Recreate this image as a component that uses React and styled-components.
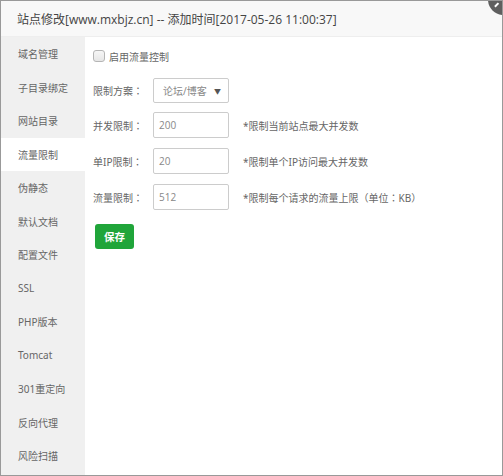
import React from "react";
import styled, { createGlobalStyle } from "styled-components";

const Global = createGlobalStyle`
  html, body { margin: 0; padding: 0; background: #fff; }
  body { font-family: "Noto Sans", "Noto Sans CJK SC", sans-serif; }
  * { box-sizing: border-box; }
`;

const Window = styled.div`
  position: relative;
  width: 503px;
  height: 476px;
  border: 1px solid #999;
  overflow: hidden;
  display: flex;
  flex-direction: column;
  background: #fff;
`;

const TitleBar = styled.div`
  height: 36px;
  flex: none;
  background: #f8f8f8;
  border-bottom: 1px solid #eee;
  padding-left: 16px;
  display: flex;
  align-items: center;
  font-size: 12px;
  color: #444;
  font-family: "Open Sans", "Noto Sans CJK SC", sans-serif;
`;

const CloseBtn = styled.div`
  position: absolute;
  top: -17px;
  right: -17px;
  width: 31px;
  height: 31px;
  border-radius: 50%;
  background: #5f5f5f;
  &::before {
    content: "";
    position: absolute;
    left: 6px;
    top: 20px;
    width: 5px;
    height: 1.5px;
    background: #fff;
    transform: rotate(-45deg);
  }
`;

const Body = styled.div`
  flex: 1;
  display: flex;
  min-height: 0;
`;

const Sidebar = styled.div`
  width: 84px;
  flex: none;
  background: #f0f0f0;
  display: flex;
  flex-direction: column;
`;

const NavItem = styled.div`
  height: 33.5px;
  flex: none;
  display: flex;
  align-items: center;
  padding-left: 17px;
  font-size: 10px;
  color: #666;
  background: ${(p) => (p.$active ? "#fff" : "transparent")};
`;

const Content = styled.div`
  flex: 1;
  padding: 9px 0 0 8px;
  font-size: 10px;
  color: #666;
  font-family: "Noto Sans", "Noto Sans CJK TC", sans-serif;
  display: flex;
  flex-direction: column;
  align-items: flex-start;
`;

const CheckRow = styled.div`
  height: 20px;
  display: flex;
  align-items: center;
  gap: 4px;
  margin-bottom: 12px;
  color: #666;
`;

const CheckBox = styled.span`
  width: 12px;
  height: 12px;
  border: 1px solid #b5b5b5;
  border-radius: 3px;
  background: linear-gradient(#f6f6f6, #e6e6e6);
  display: inline-block;
`;

const Row = styled.div`
  display: flex;
  align-items: center;
  margin-bottom: ${(p) => p.$mb}px;
`;

const Label = styled.span`
  width: 60px;
  flex: none;
  color: #666;
`;

const Select = styled.div`
  width: 76px;
  height: 25px;
  border: 1px solid #ccc;
  border-radius: 2px;
  display: flex;
  align-items: center;
  justify-content: space-between;
  padding: 0 7px 0 9px;
  color: #888;
  white-space: nowrap;
`;

const Arrow = styled.span`
  font-size: 7px;
  color: #555;
`;

const Input = styled.div`
  width: 76px;
  height: 26px;
  border: 1px solid #ccc;
  border-radius: 2px;
  display: flex;
  align-items: center;
  padding-left: 5px;
  color: #888;
  font-family: "Open Sans", sans-serif;
  font-size: 10px;
`;

const Hint = styled.span`
  margin-left: 14px;
  color: #666;
`;

const SaveBtn = styled.button`
  margin-left: 2px;
  width: 39px;
  height: 25px;
  border: none;
  border-radius: 3px;
  background: #20a53a;
  color: #fff;
  font-size: 10.5px;
  font-weight: bold;
  font-family: "Noto Sans CJK SC", sans-serif;
  padding: 0;
`;

const navs = [
  "域名管理",
  "子目录绑定",
  "网站目录",
  "流量限制",
  "伪静态",
  "默认文档",
  "配置文件",
  "SSL",
  "PHP版本",
  "Tomcat",
  "301重定向",
  "反向代理",
  "风险扫描",
];

const fields = [
  { label: "并发限制：", value: "200", hint: "*限制当前站点最大并发数" },
  { label: "单IP限制：", value: "20", hint: "*限制单个IP访问最大并发数" },
  { label: "流量限制：", value: "512", hint: "*限制每个请求的流量上限（单位：KB）" },
];

export default function App() {
  return (
    <>
      <Global />
      <Window>
        <CloseBtn />
        <TitleBar>站点修改[www.mxbjz.cn] -- 添加时间[2017-05-26 11:00:37]</TitleBar>
        <Body>
          <Sidebar>
            {navs.map((n) => (
              <NavItem key={n} $active={n === "流量限制"}>
                {n}
              </NavItem>
            ))}
          </Sidebar>
          <Content>
            <CheckRow>
              <CheckBox />
              <span>启用流量控制</span>
            </CheckRow>
            <Row $mb={9}>
              <Label>限制方案：</Label>
              <Select>
                <span>论坛/博客</span>
                <Arrow>▼</Arrow>
              </Select>
            </Row>
            {fields.map((f, i) => (
              <Row key={f.label} $mb={i === 2 ? 14 : 10}>
                <Label>{f.label}</Label>
                <Input>{f.value}</Input>
                <Hint>{f.hint}</Hint>
              </Row>
            ))}
            <SaveBtn>保存</SaveBtn>
          </Content>
        </Body>
      </Window>
    </>
  );
}
